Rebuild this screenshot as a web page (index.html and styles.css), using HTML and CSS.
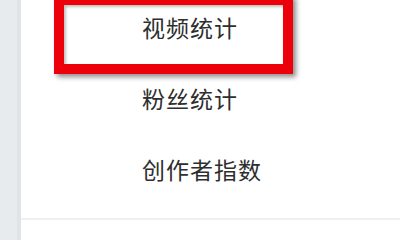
FILE: index.html
```html
<!DOCTYPE html>
<html lang="zh-CN">
<head>
<meta charset="utf-8">
<link rel="stylesheet" href="styles.css">
</head>
<body>
<div class="page">
  <aside class="sidebar"></aside>
  <main class="content">
    <ul class="menu">
      <li class="menu-item">视频统计</li>
      <li class="menu-item">粉丝统计</li>
      <li class="menu-item">创作者指数</li>
    </ul>
    <div class="divider"></div>
  </main>
  <div class="highlight"></div>
</div>
</body>
</html>
```
FILE: styles.css
```css
html, body {
  margin: 0;
  padding: 0;
  background: #ffffff;
}
.page {
  position: relative;
  display: flex;
  width: 400px;
  height: 240px;
  overflow: hidden;
  font-family: "Noto Sans CJK SC", "Noto Sans", sans-serif;
}
.sidebar {
  width: 17px;
  flex: none;
  background: #e8ebee;
  border-right: 4px solid #e0e3e7;
}
.content {
  flex: 1;
  display: flex;
  flex-direction: column;
}
.menu {
  list-style: none;
  margin: 0;
  padding: 12px 0 0 121px;
  display: flex;
  flex-direction: column;
  gap: 41px;
}
.menu-item {
  font-size: 23px;
  line-height: 30px;
  letter-spacing: 1px;
  color: #2e2e2e;
  white-space: nowrap;
}
.divider {
  margin-top: 34px;
  height: 2px;
  background: #eef0f2;
}
.highlight {
  position: absolute;
  left: 54px;
  top: -5px;
  width: 219px;
  height: 59px;
  border: 10px solid #ec0009;
  box-shadow: 3px 3px 5px rgba(0, 0, 0, 0.45), inset 2px 2px 3px rgba(0, 0, 0, 0.25);
}
```
